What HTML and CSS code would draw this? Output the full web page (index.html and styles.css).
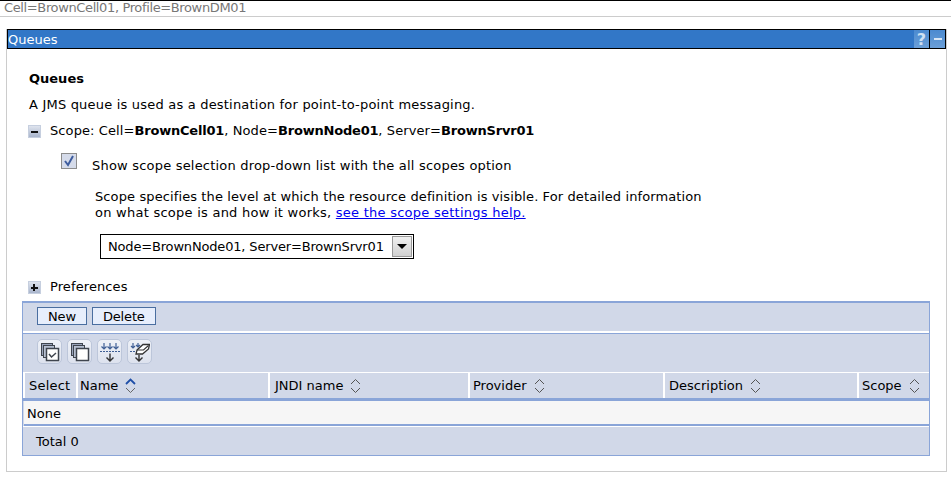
FILE: index.html
```html
<!DOCTYPE html>
<html lang="en">
<head>
    <meta charset="UTF-8">
    <title>Queues</title>
    <link rel="stylesheet" href="styles.css">
</head>
<body>
    <div class="context">Cell=BrownCell01, Profile=BrownDM01</div>
    <div class="portlet">
        <div class="portlet-title">
            <span class="portlet-name">Queues</span>
            <span class="title-btn help">?</span>
            <span class="title-btn minimize"><span class="dash"></span></span>
        </div>
        <div class="portlet-body">
            <h1>Queues</h1>
            <p class="intro">A JMS queue is used as a destination for point-to-point messaging.</p>
            <div class="twisty-row scope-row">
                <span class="twisty"><span class="bar"></span></span>
                <span>Scope: Cell=<b>BrownCell01</b>, Node=<b>BrownNode01</b>, Server=<b>BrownSrvr01</b></span>
            </div>
            <div class="check-row">
                <svg class="check" width="16" height="16" viewBox="0 0 16 16">
                    <rect x="0.5" y="0.5" width="15" height="15" fill="#d5dbea" stroke="#8c8c8c"/>
                    <path d="M4 8l3 4 5-9" fill="none" stroke="#3d5c9e" stroke-width="2"/>
                </svg>
                <span class="check-label">Show scope selection drop-down list with the all scopes option</span>
            </div>
            <p class="scope-help">Scope specifies the level at which the resource definition is visible. For detailed information<br><span class="help-second">on what scope is and how it works, <a href="#">see the scope settings help.</a></span></p>
            <div class="select">
                <span class="select-text">Node=BrownNode01, Server=BrownSrvr01</span>
                <span class="select-arrow"><span class="triangle"></span></span>
            </div>
            <div class="twisty-row pref-row">
                <span class="twisty"><span class="bar"></span><span class="bar upright"></span></span>
                <span>Preferences</span>
            </div>
            <div class="collection">
                <div class="buttons">
                    <button type="button">New</button>
                    <button type="button">Delete</button>
                </div>
                <div class="tools">
                    <span class="tool">
                        <svg width="20" height="20" viewBox="0 0 20 20" fill="none" stroke="#3f454e">
                            <rect x="1.500" y="1.500" width="11" height="12" fill="#98a3ba"/>
                            <rect x="3.500" y="3.500" width="11" height="12" fill="#b7c0d2"/>
                            <rect x="6.500" y="6.500" width="12" height="12" fill="#fff" stroke-width="1.500"/>
                            <path d="M9 12l2.500 3 4.500-4" stroke-width="1.500"/>
                        </svg>
                    </span>
                    <span class="tool">
                        <svg width="20" height="20" viewBox="0 0 20 20" fill="none" stroke="#3f454e">
                            <rect x="1.500" y="1.500" width="11" height="12" fill="#98a3ba"/>
                            <rect x="3.500" y="3.500" width="11" height="12" fill="#b7c0d2"/>
                            <rect x="6.500" y="6.500" width="12" height="12" fill="#fff" stroke-width="1.500"/>
                        </svg>
                    </span>
                    <span class="tool">
                        <svg width="20" height="20" viewBox="0 0 20 20" fill="none" stroke="#333">
                            <path d="M4 1v6M1.500 4.500L4 7l2.500-2.500M10 1v6M7.500 4.500L10 7l2.500-2.500M16 1v6M13.500 4.500L16 7l2.500-2.500" stroke="#3f5f95" stroke-width="1.200"/>
                            <path d="M0 9.500h20" stroke="#3f5f95" stroke-dasharray="2 1"/>
                            <path d="M10 11.500v7.500M6.500 15.500L10 19l3.500-3.500" stroke-width="1.400"/>
                        </svg>
                    </span>
                    <span class="tool">
                        <svg width="20" height="20" viewBox="0 0 20 20" fill="none" stroke="#333">
                            <path d="M3 1v5M1 4l2 2 2-2M8 1v4M6 3l2 2 2-2" stroke="#3f5f95" stroke-width="1.200"/>
                            <path d="M0 9.500h7" stroke="#3f5f95" stroke-dasharray="2 1"/>
                            <path d="M7 8l6-5.500h6.500l-1 4.500-6 5H6z" fill="#fff" stroke-width="1.300"/>
                            <path d="M7 8h6.500l5-4.500" stroke-width="1.100"/>
                            <path d="M9 13v6M5.500 15.500L9 19l3.500-3.500" stroke-width="1.400"/>
                        </svg>
                    </span>
                </div>
                <div class="grid grid-head">
                    <div class="col col-select">Select</div>
                    <div class="col col-name">Name <svg class="sort" width="11" height="16" viewBox="0 0 11 16" fill="none"><path d="M1 6l4.500-4.500L10 6" stroke="#1f4fa8" stroke-width="1.800"/><path d="M1 10l4.500 4.500L10 10" stroke="#666"/></svg></div>
                    <div class="col col-jndi">JNDI name <svg class="sort" width="11" height="16" viewBox="0 0 11 16" fill="none" stroke="#555"><path d="M1 6l4.500-4.500L10 6"/><path d="M1 10l4.500 4.500L10 10"/></svg></div>
                    <div class="col">Provider <svg class="sort" width="11" height="16" viewBox="0 0 11 16" fill="none" stroke="#555"><path d="M1 6l4.500-4.500L10 6"/><path d="M1 10l4.500 4.500L10 10"/></svg></div>
                    <div class="col col-desc">Description <svg class="sort" width="11" height="16" viewBox="0 0 11 16" fill="none" stroke="#555"><path d="M1 6l4.500-4.500L10 6"/><path d="M1 10l4.500 4.500L10 10"/></svg></div>
                    <div class="col">Scope <svg class="sort" width="11" height="16" viewBox="0 0 11 16" fill="none" stroke="#555"><path d="M1 6l4.500-4.500L10 6"/><path d="M1 10l4.500 4.500L10 10"/></svg></div>
                </div>
                <div class="none-row">None</div>
                <div class="total-row">Total 0</div>
            </div>
        </div>
    </div>
</body>
</html>
```

FILE: styles.css
```css
body {
    margin: 0;
    font-family: "DejaVu Sans", Verdana, sans-serif;
    font-size: 13px;
    color: #000;
    background-color: #fff;
    border-top: 1px solid #000;
}
b {
    letter-spacing: -0.2px;
}
.context {
    height: 15px;
    line-height: 13px;
    padding-left: 4px;
    color: #777;
    letter-spacing: -0.37px;
    border-bottom: 1px solid #ccc;
}
.portlet {
    margin: 12px 4px 0 6px;
    height: 443px;
    box-sizing: border-box;
    border: 1px solid #ccc;
    border-top: 0;
}
.portlet-title {
    display: flex;
    align-items: center;
    height: 20px;
    box-sizing: border-box;
    background-color: #3277c7;
    border: 1px solid #000;
    color: #fff;
}
.portlet-name {
    flex: 1;
}
.title-btn {
    display: flex;
    align-items: center;
    justify-content: center;
    width: 15px;
    height: 18px;
    font-weight: bold;
    color: #cfe0f2;
    background-image: linear-gradient(#4b8ad0, #6b9fd8);
}
.help {
    font-size: 16px;
}
.minimize {
    border-left: 1px solid #000;
}
.dash {
    width: 8px;
    height: 2px;
    background-color: #d8e6f5;
}
.portlet-body {
    padding-left: 22px;
}
h1 {
    margin: 22px 0 0 0;
    font-size: 13px;
    line-height: 16px;
}
.intro {
    margin: 10px 0 0 0;
    line-height: 16px;
    letter-spacing: 0.2px;
}
.twisty-row {
    display: flex;
    align-items: center;
    gap: 9px;
    line-height: 16px;
    letter-spacing: 0.1px;
}
.scope-row {
    margin-top: 10px;
}
.twisty {
    position: relative;
    width: 11px;
    height: 11px;
    margin-left: -1px;
    background-image: linear-gradient(#dfe4ee, #a9b5cc);
    border: 1px solid #c6cfdf;
}
.bar {
    position: absolute;
    left: 2px;
    top: 5px;
    width: 7px;
    height: 2px;
    background-color: #111;
}
.upright {
    left: 4px;
    top: 2px;
    width: 2px;
    height: 7px;
}
.check-row {
    display: flex;
    align-items: flex-start;
    gap: 15px;
    margin: 14px 0 0 32px;
    line-height: 16px;
}
.check-label {
    margin-top: 5px;
    letter-spacing: 0.2px;
}
.scope-help {
    margin: 15px 0 0 66px;
    line-height: 16px;
    letter-spacing: 0.11px;
}
.help-second {
    letter-spacing: 0.25px;
}
a {
    color: #0000ee;
}
.select {
    display: flex;
    width: 314px;
    height: 25px;
    box-sizing: border-box;
    margin: 13px 0 0 71px;
    border: 1px solid #000;
    align-items: center;
}
.select-text {
    flex: 1;
    padding-left: 7px;
    letter-spacing: -0.17px;
}
.select-arrow {
    display: flex;
    align-items: center;
    justify-content: center;
    width: 20px;
    height: 21px;
    margin-right: 1px;
    box-sizing: border-box;
    border: 1px solid #999;
    background-image: linear-gradient(#f0f0f0, #d0d0d0);
}
.triangle {
    border-left: 5px solid transparent;
    border-right: 5px solid transparent;
    border-top: 5px solid #000;
}
.pref-row {
    margin-top: 20px;
}
.collection {
    width: 908px;
    margin: 6px 0 0 -7px;
    box-sizing: border-box;
    border: 1px solid #8aa5d8;
    border-top-width: 2px;
    background-color: #d1d8e8;
}
.buttons {
    display: flex;
    gap: 5px;
    height: 30px;
    padding: 4px 0 0 14px;
    box-sizing: border-box;
    border-bottom: 2px solid #fff;
}
button {
    height: 18px;
    padding: 1px 10px 0;
    font-family: inherit;
    font-size: 13px;
    line-height: 14px;
    letter-spacing: -0.15px;
    color: #000;
    background-color: #e7eefc;
    border: 1px solid #4a6ea0;
    border-radius: 0;
}
.tools {
    display: flex;
    gap: 5px;
    height: 39px;
    padding: 5px 0 0 14px;
    box-sizing: border-box;
    border-top: 1px solid #8aa5d8;
}
.tool {
    display: flex;
    align-items: center;
    justify-content: center;
    width: 25px;
    height: 25px;
    box-sizing: border-box;
    background-image: linear-gradient(#eef1f7, #dde2ee);
    border: 1px solid #bcc6da;
    border-radius: 5px;
}
.grid {
    display: grid;
    grid-template-columns: 53px 192px 200px 195px 194px 1fr;
}
.grid-head {
    height: 29px;
    border-top: 1px solid #fff;
    border-bottom: 3px solid #8aa5d8;
    box-sizing: border-box;
}
.col {
    display: flex;
    align-items: center;
    gap: 6px;
    padding-left: 3px;
    border-left: 2px solid #fff;
}
.col-select {
    padding-left: 4px;
    letter-spacing: 0.2px;
}
.col-name {
    padding-left: 2px;
}
.col-jndi {
    padding-left: 5px;
}
.col-desc {
    padding-left: 4px;
}
.sort {
    margin-left: 1px;
}
.none-row {
    height: 23px;
    line-height: 25px;
    padding-left: 3px;
    margin-left: 1px;
    background-color: #f6f6f6;
    border-bottom: 2px solid #8aa5d8;
}
.total-row {
    height: 28px;
    line-height: 29px;
    padding-left: 13px;
    border-top: 1px solid #fff;
}
```
